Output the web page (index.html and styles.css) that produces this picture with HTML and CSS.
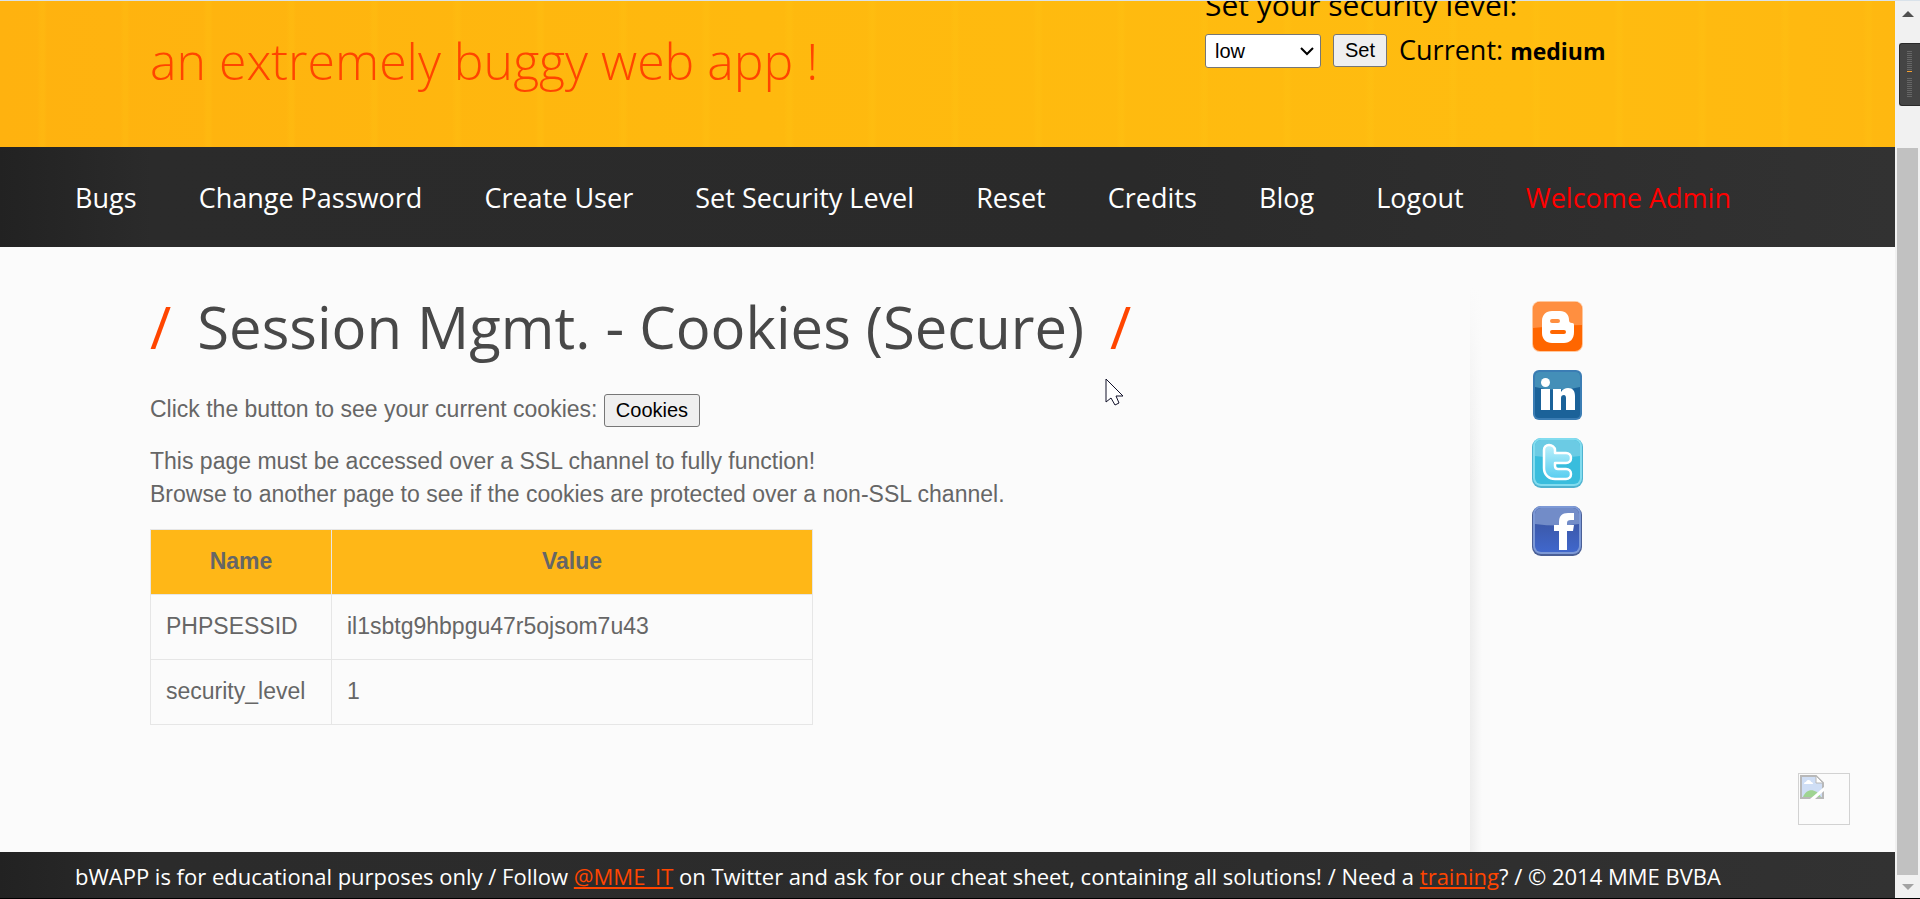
FILE: index.html
```html
<!DOCTYPE html>
<html lang="en">
<head>
<meta charset="utf-8">
<title>bWAPP - Session Management</title>
<link rel="stylesheet" href="styles.css">
</head>
<body>
<div class="window">
  <div class="page">
    <header class="header">
      <h2 class="tagline">an extremely buggy web app !</h2>
      <form class="level-form">
        <label class="level-label" for="level">Set your security level:</label>
        <div class="level-row">
          <span class="select-wrap">
            <select class="level-select" id="level"><option>low</option><option>medium</option><option>high</option></select>
            <svg class="chevron" viewBox="0 0 14 9" aria-hidden="true"><path d="M1 1 7 7l6-6" fill="none" stroke="#000" stroke-width="2"/></svg>
          </span>
          <button class="button" type="button">Set</button>
          <span>Current: <b class="current">medium</b></span>
        </div>
      </form>
    </header>
    <nav class="menu">
      <a href="#bugs">Bugs</a>
      <a href="#password">Change Password</a>
      <a href="#user">Create User</a>
      <a href="#level">Set Security Level</a>
      <a href="#reset">Reset</a>
      <a href="#credits">Credits</a>
      <a href="#blog">Blog</a>
      <a href="#logout">Logout</a>
      <a class="welcome" href="#admin">Welcome Admin</a>
    </nav>
    <div class="body">
      <main class="main">
        <h1 class="title"><span class="slash">/</span><span>Session Mgmt. - Cookies (Secure)</span><span class="slash">/</span></h1>
        <p class="prompt">Click the button to see your current cookies: <button class="button" type="button">Cookies</button></p>
        <p class="note">This page must be accessed over a SSL channel to fully function!<br>Browse to another page to see if the cookies are protected over a non-SSL channel.</p>
        <table class="cookies">
          <thead><tr><th class="name-col">Name</th><th>Value</th></tr></thead>
          <tbody>
            <tr><td>PHPSESSID</td><td>il1sbtg9hbpgu47r5ojsom7u43</td></tr>
            <tr><td>security_level</td><td>1</td></tr>
          </tbody>
        </table>
      </main>
      <aside class="side">
        <a href="#blogger" aria-label="Blogger"><svg class="social" viewBox="0 0 51 51">
          <rect width="51" height="51" rx="8" fill="#ffc79c"/><rect x="1" y="1" width="49" height="49" rx="7" fill="#ff6600"/>
          <path d="M1 27V8a7 7 0 0 1 7-7h35a7 7 0 0 1 7 7v16Q25 24 1 27z" fill="#ff8f40"/>
          <path fill-rule="evenodd" fill="#fff" d="M20 10h8c6 0 9 4 9 9 0 2 1 3 3 3s2 1 2 3v6c0 7-4 11-10 11H20c-6 0-10-4-10-10V20c0-6 4-10 10-10zm0 8a2 2 0 0 0 0 4h6a2 2 0 0 0 0-4zm0 11a2 2 0 0 0 0 4h12a2 2 0 0 0 0-4z"/>
        </svg></a>
        <a href="#linkedin" aria-label="LinkedIn"><svg class="social" viewBox="0 0 51 51">
          <rect x="1" y="1" width="49" height="50" rx="6" fill="#3b7db4"/><rect x="3" y="3" width="45" height="46" rx="4" fill="#1b6299"/>
          <path d="M3 18V7a4 4 0 0 1 4-4h37a4 4 0 0 1 4 4v11Q26 24 3 18z" fill="#448fb8"/>
          <circle cx="13.500" cy="13.500" r="4.500" fill="#fff"/>
          <path fill="#fff" d="M9 20h9v21H9zM21 20h8v3c2-3 4-4 7-4 5 0 7 3 7 8v14h-9V29c0-2-1-3-2-3-2 0-3 1-3 3v12h-8z"/>
        </svg></a>
        <a href="#twitter" aria-label="Twitter"><svg class="social" viewBox="0 0 51 51">
          <defs><linearGradient id="bird" x1="0" y1="0" x2="0" y2="1"><stop offset="0" stop-color="#bdf0fb"/><stop offset="1" stop-color="#56cdf0"/></linearGradient></defs>
          <rect y="1" width="51" height="50" rx="9" fill="#4fb3d0"/><rect x="1" y="1" width="49" height="48" rx="8" fill="#82dcef"/><rect x="3" y="3" width="45" height="44" rx="6" fill="#39bddd"/>
          <path d="M3 19V9a6 6 0 0 1 6-6h33a6 6 0 0 1 6 6v10Q26 22 3 19z" fill="#6bcbe4"/>
          <path fill="url(#bird)" stroke="#fff" stroke-width="2.500" stroke-linejoin="round" d="M12 13c0-3 2-5 5-5s6 2 6 5v3h11c3 0 5 2 5 5s-2 5-5 5H23v3c0 2 1 3 3 3h8c3 0 5 2 5 5s-2 5-5 5H23c-6 0-11-4-11-11z"/>
        </svg></a>
        <a href="#facebook" aria-label="Facebook"><svg class="social" viewBox="0 0 51 51">
          <defs><linearGradient id="fb" x1="0" y1="0" x2="0" y2="1"><stop offset="0" stop-color="#3a5197"/><stop offset="1" stop-color="#4067cc"/></linearGradient></defs>
          <rect y="1" width="50" height="50" rx="9" fill="#4a5f96"/><rect x="1" y="1" width="48" height="48" rx="8" fill="#7d99d6"/><rect x="3" y="3" width="44" height="44" rx="6" fill="url(#fb)"/>
          <path d="M3 19V9a6 6 0 0 1 6-6h32a6 6 0 0 1 6 6v10Q26 22 3 19z" fill="#728cc8"/>
          <path fill="#fff" d="M27 45V26h-5v-6h5v-3c0-6 3-9 9-9h6v7h-3c-3 0-4 1-4 3v2h7l-1 6h-6v19z"/>
        </svg></a>
        <div class="missing"><svg class="missing-icon" viewBox="0 0 24 24">
          <path d="M1 1h15l7 7v15H1z" fill="#cfdef5" stroke="#b8b8b8" stroke-width="2"/>
          <path d="M16 1v7h7z" fill="#fff" stroke="#b8b8b8"/>
          <path d="M4 9c0-2 2-2 2-2 1-3 5-2 5 0 2 0 2 2 2 2z" fill="#fff"/>
          <path d="M3 22c3-8 12-10 18 0z" fill="#9fd492"/><path d="M10 24 24 12v4l-9 8z" fill="#fff"/>
        </svg></div>
      </aside>
    </div>
    <footer class="footer">bWAPP is for educational purposes only / Follow <a href="#mme">@MME_IT</a> on Twitter and ask for our cheat sheet, containing all solutions! / Need a <a href="#training">training</a>? / © 2014 MME BVBA</footer>
  </div>
  <div class="scrollbar" aria-hidden="true">
    <svg class="arrow" viewBox="0 0 12 6"><path d="M0 6 6 0l6 6z" fill="#505050"/></svg>
    <div class="thumb"></div>
    <svg class="arrow" viewBox="0 0 12 6"><path d="M0 0 6 6l6-6z" fill="#a3a3a3"/></svg>
    <div class="meter"><div class="ticks"></div><div class="level"></div><div class="ticks"></div></div>
  </div>
</div>
<svg class="pointer" viewBox="0 0 19 28" aria-hidden="true"><path d="M1 1v23l5-4 4 7 4-2-3-7h7z" fill="#fff" stroke="#101028"/></svg>
</body>
</html>
```

FILE: styles.css
```css
* { box-sizing: border-box; }

body {
  margin: 0;
  font-family: "Liberation Sans", Arial, sans-serif;
  font-size: 23px;
  line-height: 33px;
  color: #666;
}

.window {
  display: flex;
  min-height: 100vh;
  border-top: 1px solid #d9e2ea;
  border-bottom: 1px solid #000;
}

.page {
  flex: 1;
  display: flex;
  flex-direction: column;
  background: #fbfbfb;
}

.header,
.menu,
.title,
.footer { font-family: "Open Sans", sans-serif; }

.header {
  display: flex;
  align-items: flex-end;
  height: 146px;
  padding: 0 0 79px 150px;
  overflow: hidden;
  color: #000;
  background:
    repeating-linear-gradient(90deg, transparent 0 37px, rgba(255, 200, 20, 0.2) 41px 44px, transparent 47px 83px),
    linear-gradient(90deg, #ffb20f, #ffb90e 40%, #ffbc10 80%, #ffb810);
}

.tagline {
  align-self: flex-start;
  flex: 0 0 1055px;
  margin: 0;
  padding-top: 30px;
  font-size: 50px;
  font-weight: 300;
  line-height: 60px;
  color: #ff4500;
}

.level-label { display: block; font-size: 30px; }

.level-row {
  display: flex;
  align-items: center;
  gap: 12px;
  padding-top: 12px;
  font-size: 27px;
}

.select-wrap { position: relative; display: flex; }

.level-select {
  appearance: none;
  width: 116px;
  height: 34px;
  padding: 0 9px;
  font: 20px "Liberation Sans", Arial, sans-serif;
  color: #000;
  background: #fff;
  border: 1px solid #767676;
  border-radius: 3px;
}

.chevron {
  position: absolute;
  right: 7px;
  top: 13px;
  width: 14px;
  height: 9px;
  pointer-events: none;
}

.button {
  height: 33px;
  padding: 0 11px;
  font: 20px "Liberation Sans", Arial, sans-serif;
  color: #000;
  background: #efefef;
  border: 1px solid #767676;
  border-radius: 3px;
}

.current { font-size: 23px; }

.menu {
  display: flex;
  justify-content: space-between;
  align-items: center;
  height: 100px;
  padding: 0 164px 0 75px;
  font-size: 27px;
  background: linear-gradient(90deg, #222, #2b2b2b 8%, #2a2a2a 60%, #323232);
}

.menu a { color: #fff; text-decoration: none; }
.menu .welcome { color: #f00; }

.body { flex: 1; display: flex; }

.main { flex: 1; padding: 40px 0 0 150px; }

.title {
  display: flex;
  gap: 26px;
  margin: 0 0 26px;
  font-size: 58px;
  font-weight: 400;
  line-height: 80px;
  color: #484848;
}

.slash { color: #ff4500; }

.prompt { margin: 0; }
.note { margin: 18px 0; }

.cookies {
  width: 663px;
  border-collapse: collapse;
}

.cookies th,
.cookies td {
  height: 65px;
  padding: 0 15px 2px;
  border: 1px solid #e6e6e6;
  text-align: left;
}

.cookies th { text-align: center; background: #ffb717; }
.cookies .name-col { width: 181px; }

.side {
  position: relative;
  flex: 0 0 425px;
  display: flex;
  flex-direction: column;
  gap: 17px;
  padding: 54px 0 0 62px;
  background:
    linear-gradient(#fbfbfb 40px, transparent 240px),
    linear-gradient(90deg, #ededed, #fbfbfb 12px);
}

.side a { width: 51px; height: 51px; }
.social { display: block; width: 51px; height: 51px; }

.missing {
  position: absolute;
  right: 45px;
  bottom: 27px;
  width: 52px;
  height: 52px;
  padding: 1px;
  border: 1px solid #d2d2d2;
}

.missing-icon { display: block; width: 24px; height: 24px; }

.footer {
  padding: 8px 75px 5px;
  font-size: 22px;
  color: #fff;
  background: linear-gradient(90deg, #222, #2b2b2b 8%, #2c2c2c 60%, #323232);
}

.footer a { color: #ff4500; }

.scrollbar {
  position: relative;
  flex: 0 0 25px;
  display: flex;
  flex-direction: column;
  align-items: center;
  padding: 10px 0 8px;
  background: #f1f1f1;
}

.arrow { width: 12px; height: 6px; }

.thumb {
  flex: 1;
  width: 21px;
  margin: 131px 0 9px;
  background: #c1c1c1;
}

.meter {
  position: absolute;
  top: 42px;
  right: 0;
  width: 21px;
  height: 63px;
  padding: 7px;
  background: #444;
  border: 1px solid #2a2a2a;
  border-right: 0;
  border-radius: 3px 0 0 3px;
}

.ticks {
  width: 5px;
  height: 19px;
  background: repeating-linear-gradient(#666 0 1px, transparent 1px 2px);
}

.level { width: 5px; height: 1px; margin: 1px 0 6px; background: #f5a030; }

.pointer {
  position: absolute;
  left: 1105px;
  top: 378px;
  width: 19px;
  height: 28px;
}
```
